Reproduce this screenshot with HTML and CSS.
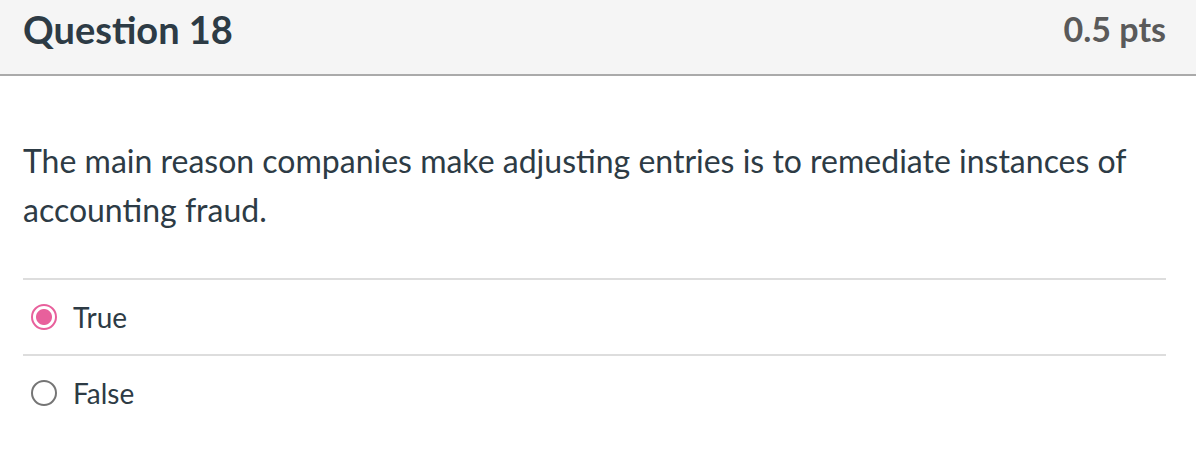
FILE: index.html
```html
<!DOCTYPE html>
<html>
<head>
<meta charset="utf-8">
<link rel="stylesheet" href="styles.css">
</head>
<body>
<div class="question">
  <div class="q-header">
    <h2 class="q-title">Question 18</h2>
    <span class="q-points">0.5 pts</span>
  </div>
  <div class="q-body">
    <p class="q-text">The main reason companies make adjusting entries is to remediate instances of accounting fraud.</p>
    <div class="answers">
      <label class="answer">
        <span class="radio radio-checked"></span>
        <span class="answer-text">True</span>
      </label>
      <label class="answer">
        <span class="radio"></span>
        <span class="answer-text">False</span>
      </label>
    </div>
  </div>
</div>
</body>
</html>
```
FILE: styles.css
```css
html, body {
  margin: 0;
  padding: 0;
  background: #ffffff;
}
body {
  font-family: Lato, "Open Sans", sans-serif;
  color: #2d3b45;
  width: 1196px;
  height: 466px;
  overflow: hidden;
}
.q-header {
  display: flex;
  align-items: center;
  justify-content: space-between;
  height: 74px;
  padding: 0 30px 0 23px;
  background: #f5f5f5;
  border-bottom: 2px solid #aaaaaa;
}
.q-title {
  margin: 0;
  font-size: 38px;
  font-weight: 700;
  color: #2d3b45;
  line-height: 1;
  padding-bottom: 16px;
}
.q-points {
  font-size: 34px;
  font-weight: 700;
  color: #5a5a5a;
  line-height: 1;
  padding-bottom: 16px;
}
.q-body {
  padding: 0 30px 0 23px;
}
.q-text {
  margin: 0;
  padding-top: 60px;
  padding-bottom: 44px;
  font-size: 32px;
  line-height: 49px;
}
.answers {
  display: flex;
  flex-direction: column;
}
.answer {
  display: flex;
  align-items: center;
  height: 74px;
  border-top: 2px solid #dddddd;
  padding-left: 8px;
}
.radio {
  width: 22px;
  height: 22px;
  border-radius: 50%;
  border: 2px solid #757575;
  box-sizing: content-box;
  margin-right: 16px;
  background: #fff;
}
.radio-checked {
  border-color: #e8609c;
  background: radial-gradient(circle, #e8609c 0 7.5px, #ffffff 8.5px);
}
.answer-text {
  font-size: 28px;
  color: #2d3b45;
}
```
